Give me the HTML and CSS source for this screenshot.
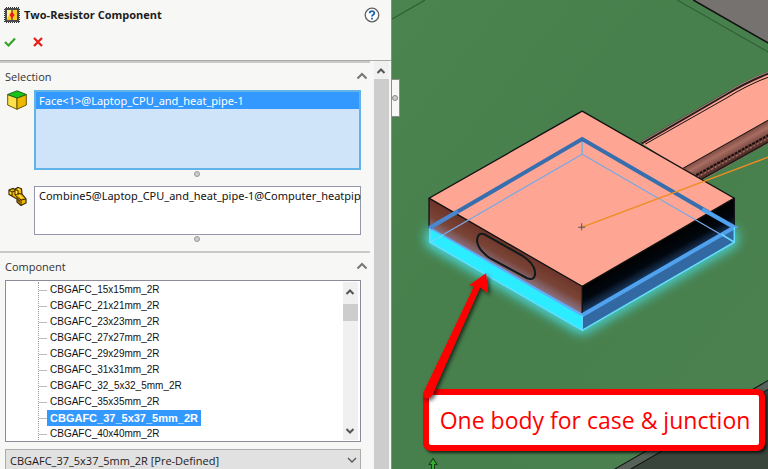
FILE: index.html
```html
<!DOCTYPE html>
<html lang="en">
<head>
<meta charset="utf-8">
<title>Two-Resistor Component</title>
<link rel="stylesheet" href="styles.css">
</head>
<body>
<main class="app">
  <aside class="panel">
    <header class="panel-head">
      <div class="title-row">
        <svg class="icon-16" viewBox="0 0 16 16" aria-hidden="true">
          <path d="M2 .5H15M2 15.500H15M.5 2V15M15.500 2V15" stroke="#333" stroke-dasharray="1 1"/>
          <rect x="1" y="1" width="14" height="14" fill="#4b4b4b"/>
          <rect x="3" y="3" width="10" height="10" fill="#ffc928"/>
          <path d="M3 3h5L3 12z" fill="#fff08a"/>
          <path d="M8 3v10" stroke="#222"/>
          <path d="M8 4.500L10.500 8 8 11.500 5.500 8z" fill="#ed1c16"/>
        </svg>
        <h1>Two-Resistor Component</h1>
        <button class="plain help" aria-label="Help">
          <svg class="icon-16" viewBox="0 0 16 16"><circle cx="8" cy="8" r="6.800" fill="#fff" stroke="#626262" stroke-width="1.300"/><path d="M5.700 6.300C5.700 3.300 10.400 3.400 10.300 6.200C10.200 7.800 8 7.700 8 9.500M8 10.800v1.700" fill="none" stroke="#1d66b0" stroke-width="1.900"/></svg>
        </button>
      </div>
      <div class="action-row">
        <button class="plain" aria-label="OK"><svg class="icon-12" viewBox="0 0 12 12"><path d="M1 6l3.500 3.500L11 2.500" fill="none" stroke="#36a329" stroke-width="2.200"/></svg></button>
        <button class="plain" aria-label="Cancel"><svg class="icon-12" viewBox="0 0 12 12"><path d="M2 2l8 8M10 2l-8 8" fill="none" stroke="#e32119" stroke-width="2.300"/></svg></button>
      </div>
    </header>
    <div class="panel-body">
      <div class="sections">
        <section class="section">
          <div class="section-head">
            <h2>Selection</h2>
            <button class="plain" aria-label="Collapse Selection"><svg class="chev" viewBox="0 0 12 8"><path d="M1.500 6.500L6 2l4.500 4.500" fill="none" stroke="#777" stroke-width="2"/></svg></button>
          </div>
          <div class="pick-row">
            <svg class="pick-icon" viewBox="0 0 20 20" aria-hidden="true">
              <path d="M.7 4.500L10 8v11.300L.7 15z" fill="#ffe14a" stroke="#6b5500"/>
              <path d="M19.300 4.500L10 8v11.300l9.300-4.300z" fill="#edb900" stroke="#6b5500"/>
              <path d="M.7 4.500L10 .8l9.300 3.700L10 8z" fill="#18c51b" stroke="#23661a"/>
            </svg>
            <div class="pick-box active" role="listbox" aria-label="Faces"><div class="pick" role="option" aria-selected="true">Face&lt;1&gt;@Laptop_CPU_and_heat_pipe-1</div></div>
          </div>
          <div class="grip"></div>
          <div class="pick-row">
            <svg class="pick-icon" viewBox="0 0 20 20" aria-hidden="true">
              <path d="M2 4l4-1.500 2 1V3l3-1.500L14.500 3l.5 5 4 5v4l-5 2.500-4-3.500V13L2 8.500z" fill="#efb800" stroke="#3c2900" stroke-width="1.200"/>
              <path d="M2 4l3 2v4M8 3.500V9l6 5 5-1M8 3.500l3 1V9M14 14v5M5 6l3-1M8 9l3-1.500 4 .5" fill="none" stroke="#3c2900"/>
              <path d="M9 10l4 4v3l-3-2.500z" fill="#6b4a08"/>
              <path d="M3.500 6v2M9.500 5v3M11 3l2 .8M12 9l3 3" stroke="#ffe34d" stroke-width="1.500"/>
            </svg>
            <div class="pick-box small" role="listbox" aria-label="Bodies"><div class="pick" role="option" aria-selected="false">Combine5@Laptop_CPU_and_heat_pipe-1@Computer_heatpip</div></div>
          </div>
          <div class="grip"></div>
        </section>
        <section class="section component">
          <div class="section-head">
            <h2>Component</h2>
            <button class="plain" aria-label="Collapse Component"><svg class="chev" viewBox="0 0 12 8"><path d="M1.500 6.500L6 2l4.500 4.500" fill="none" stroke="#777" stroke-width="2"/></svg></button>
          </div>
          <div class="tree-box">
            <ul class="tree" role="tree" aria-label="Component">
              <li role="treeitem"><span>CBGAFC_15x15mm_2R</span></li>
              <li role="treeitem"><span>CBGAFC_21x21mm_2R</span></li>
              <li role="treeitem"><span>CBGAFC_23x23mm_2R</span></li>
              <li role="treeitem"><span>CBGAFC_27x27mm_2R</span></li>
              <li role="treeitem"><span>CBGAFC_29x29mm_2R</span></li>
              <li role="treeitem"><span>CBGAFC_31x31mm_2R</span></li>
              <li role="treeitem"><span>CBGAFC_32_5x32_5mm_2R</span></li>
              <li role="treeitem"><span>CBGAFC_35x35mm_2R</span></li>
              <li role="treeitem" aria-selected="true"><span>CBGAFC_37_5x37_5mm_2R</span></li>
              <li role="treeitem"><span>CBGAFC_40x40mm_2R</span></li>
            </ul>
            <div class="tree-scroll">
              <svg class="arrow" viewBox="0 0 10 8"><path d="M1.500 6L5 2.500 8.500 6" fill="none" stroke="#555" stroke-width="2"/></svg>
              <div class="tree-thumb"></div>
              <svg class="arrow" viewBox="0 0 10 8"><path d="M1.500 2L5 5.500 8.500 2" fill="none" stroke="#555" stroke-width="2"/></svg>
            </div>
          </div>
          <div class="combo">
            <select aria-label="Selected component"><option>CBGAFC_37_5x37_5mm_2R [Pre-Defined]</option></select>
            <svg class="combo-arrow" viewBox="0 0 10 8" aria-hidden="true"><path d="M1 2l4 4 4-4" fill="none" stroke="#555" stroke-width="1.300"/></svg>
          </div>
        </section>
      </div>
      <div class="main-scroll">
        <svg class="arrow" viewBox="0 0 10 8"><path d="M1.500 6L5 2.500 8.500 6" fill="none" stroke="#555" stroke-width="2"/></svg>
        <div class="main-thumb"></div>
      </div>
    </div>
  </aside>

  <section class="viewport" aria-label="Model view">
    <svg class="scene" viewBox="392 0 376 469" preserveAspectRatio="xMinYMin slice" role="img" aria-label="Heat pipe and processor body">
      <defs>
        <linearGradient id="board" x1="0" y1="0" x2="1" y2="1"><stop offset="0" stop-color="#4c8450"/><stop offset=".4" stop-color="#47804c"/><stop offset="1" stop-color="#4b8150"/></linearGradient>
        <linearGradient id="brown" gradientUnits="userSpaceOnUse" x1="506" y1="242" x2="492" y2="267"><stop offset="0" stop-color="#6d3428"/><stop offset=".5" stop-color="#794437"/><stop offset="1" stop-color="#8d829d"/></linearGradient>
        <linearGradient id="black" gradientUnits="userSpaceOnUse" x1="658" y1="242" x2="672" y2="267"><stop offset="0" stop-color="#000"/><stop offset=".5" stop-color="#020810"/><stop offset="1" stop-color="#234c7e"/></linearGradient>
        <linearGradient id="tube" gradientUnits="userSpaceOnUse" x1="721" y1="146" x2="731" y2="164"><stop offset="0" stop-color="#7d473e"/><stop offset=".3" stop-color="#a86d62"/><stop offset=".6" stop-color="#7d4d45"/><stop offset="1" stop-color="#3b211c"/></linearGradient>
        <filter id="glow" x="-20%" y="-30%" width="140%" height="170%"><feGaussianBlur stdDeviation="6"/></filter>
        <filter id="soft" x="-20%" y="-20%" width="150%" height="150%"><feDropShadow dx="2" dy="2" stdDeviation="2" flood-color="#000" flood-opacity=".7"/></filter>
      </defs>
      <rect x="391" width="378" height="470" fill="url(#board)"/>
      <path d="M392 19L425 0" stroke="#2d5831" fill="none"/>
      <path d="M693 0H768V43z" fill="#757270"/>
      <path d="M693 0L768 43" stroke="#111" stroke-width="1.500"/>
      <path d="M677 0L768 52" stroke="#315d36"/>
      <path d="M614 469L768 380V469z" fill="#566159"/>
      <path d="M630 469L768 389V469z" fill="#39443a"/>
      <path d="M614 469L768 380M630 469L768 389" stroke="#111" fill="none"/>

      <path d="M641 143L724 96Q746 83 768 74V143L700 181z" fill="#ffa594"/>
      <path d="M641 143L724 95Q745 82 768 73" fill="none" stroke="#2b1b1a" stroke-width="3"/>
      <path d="M641 142L724 94Q745 81 768 72" fill="none" stroke="#b08b88"/>
      <path d="M683 168L768 120V142L698 181z" fill="url(#tube)"/>
      <path d="M683 168L768 120M645 144L726 98Q747 85 768 77" stroke="#111" fill="none"/>
      <path d="M696 175L768 135" stroke="#1a0d0b" stroke-width="2" stroke-dasharray="3 1"/>
      <path d="M697 177L768 138" stroke="#b07a6e" stroke-width="1" stroke-dasharray="2 2"/>
      <path d="M700 180L768 142" stroke="#211c19" stroke-width="1.500"/>

      <path d="M431 229V242L582 329L732 242V229" fill="none" stroke="#49efff" stroke-width="8" filter="url(#glow)"/>
      <path d="M430 236L582 323" fill="none" stroke="#49efff" stroke-width="8" opacity=".5" filter="url(#glow)"/>
      <path d="M429 198L582 286V315L429 228z" fill="url(#brown)"/>
      <path d="M582 286L734 198V227L582 315z" fill="url(#black)"/>
      <path d="M429 228L582 315V330L429 242z" fill="#2cecff"/>
      <path d="M582 315L734 227V242L582 330z" fill="#3269a2"/>
      <path d="M582 111L734 198L582 286L429 198z" fill="#ffa594" stroke="#111" stroke-width="1.300"/>
      <path d="M429 198V228M582 286V315M734 198V227" stroke="#111" stroke-width="1.300"/>
      <path d="M484 234L523 256Q534 263 535 272Q535 281 527 278L490 258Q478 250 477 241Q477 232 484 234z" fill="none" stroke="#111a1c" stroke-width="2"/>
      <path d="M430 242L582 154L734 242M582 139V154" fill="none" stroke="#7ba9e2" stroke-width="1.300"/>
      <path d="M429 228L582 139L734 227" fill="none" stroke="#376fae" stroke-width="4"/>
      <path d="M429 228L582 315" fill="none" stroke="#65aaf5" stroke-width="3"/>
      <path d="M431 231L582 318" fill="none" stroke="#2cecff" stroke-width="3"/>
      <path d="M582 315L734 227L702 209" fill="none" stroke="#50a1ee" stroke-width="4"/>
      <path d="M429 228L458 211" stroke="#4c87cd" stroke-width="4"/>
      <path d="M430 228V242L582 330V315M582 330L734 242V227M430 242L443 235M734 242L721 234" fill="none" stroke="#65ddff" stroke-width="1.500"/>
      <path d="M582 227L768 157" stroke="#ef8c21" stroke-width="1.300"/>
      <path d="M578 227h7M581.500 223v7" stroke="#555"/>

      <g stroke="#164017"><path d="M433 460V469" stroke-width="4"/><path d="M433 458l4 6h-8z" fill="#39ac35"/><path d="M433 462V469" stroke="#39ac35" stroke-width="2"/></g>
    </svg>
    <p class="callout">One body for case &amp; junction</p>
    <svg class="scene over" viewBox="392 0 376 469" preserveAspectRatio="xMinYMin slice" aria-hidden="true">
      <path d="M423.500 392Q421 398 427 398Q431 398 432.500 394L480 287L488 293L486 273L469 285L474 286z" fill="red" filter="url(#soft)"/>
    </svg>
    <button class="splitter" aria-label="Resize panel"><span class="dot"></span></button>
  </section>
</main>
</body>
</html>
```
FILE: styles.css
```css
* { box-sizing: border-box; }
body {
  margin: 0;
  font-family: "Open Sans", "Noto Sans", sans-serif;
  font-size: 11px;
  color: #1c1c1c;
}
h1, h2, p, ul { margin: 0; padding: 0; }
svg { display: block; flex: none; }
.app {
  display: grid;
  grid-template-columns: minmax(300px, 51%) 1fr;
  height: 100vh;
  overflow: hidden;
}
.plain { padding: 0; border: 0; background: none; }
.icon-16 { width: 16px; height: 16px; }
.icon-12 { width: 12px; height: 12px; }

.panel {
  display: flex;
  flex-direction: column;
  min-width: 0;
  min-height: 0;
  background: #f7f7f5;
  border-right: 1px solid #8b8d8b;
}
.panel-head { padding: 7px 11px 12px 4px; border-bottom: 1px solid #aaa; }
.title-row { display: flex; align-items: center; gap: 4px; height: 16px; }
.title-row h1 { font-size: 11px; font-weight: 700; line-height: 16px; }
.help { margin-left: auto; }
.action-row { display: flex; gap: 16px; padding-top: 13px; }

.panel-body { display: flex; flex: 1; gap: 4px; min-height: 0; padding-right: 2px; }
.sections { flex: 1; min-width: 0; overflow: hidden; }
.section { padding: 5px 9px 0 5px; border-top: 2px solid #c9c9c9; }
.section-head {
  display: flex;
  align-items: center;
  justify-content: space-between;
  height: 16px;
  margin-bottom: 6px;
}
.section-head h2 { font-size: 11px; font-weight: 500; color: #333; }
.section-head .plain { margin-right: -7px; }
.chev { width: 12px; height: 8px; }
.pick-row { display: flex; gap: 7px; padding-left: 2px; }
.pick-icon { width: 20px; height: 20px; }
.pick-box {
  flex: 1;
  min-width: 0;
  height: 49px;
  border: 1px solid #9597ad;
  background: #fff;
}
.pick-box.active { height: 80px; border: 2px solid #62b3e8; background: #cfe4f8; }
.pick {
  padding: 0 4px;
  font-family: "Noto Sans", sans-serif;
  font-size: 11px;
  line-height: 17px;
  white-space: nowrap;
  color: #111;
}
.active .pick { padding: 0 3px; background: #3399ff; color: #fff; }
.grip {
  width: 6px;
  height: 6px;
  margin: 1px 0 9px 189px;
  border: 1px solid #999;
  border-radius: 50%;
  background: #ccc;
}

.tree-box {
  display: flex;
  height: 162px;
  padding: 1px 2px 1px 0;
  border: 1px solid #8a8d99;
  background: #fff;
}
.tree {
  flex: 1;
  margin-left: 32px;
  list-style: none;
  border-left: 1px dotted #999;
  font-family: "Liberation Sans", Arial, sans-serif;
  font-size: 10px;
  color: #111;
}
.tree li { display: flex; align-items: center; height: 16px; }
.tree li::before { content: ""; width: 8px; border-top: 1px solid #bbb; }
.tree span { padding: 0 3px; line-height: 16px; }
.tree [aria-selected="true"] span { background: #3399ff; color: #fff; font-size: 11px; font-weight: 700; }
.tree-scroll {
  display: flex;
  flex-direction: column;
  justify-content: space-between;
  align-items: center;
  width: 15px;
  padding: 6px 0 5px;
  background: #f0f0f0;
}
.arrow { width: 10px; height: 8px; }
.tree-thumb { width: 15px; height: 17px; margin: 8px 0 auto; background: #cdcdcd; }
.combo { position: relative; margin-top: 7px; }
.combo select {
  appearance: none;
  display: block;
  width: 100%;
  height: 22px;
  padding: 0 20px 0 4px;
  border: 1px solid #adadad;
  border-radius: 0;
  background: #e1e1e1;
  font: 11px "Open Sans", "Noto Sans", sans-serif;
  color: #1c1c1c;
}
.combo-arrow { position: absolute; top: 7px; right: 4px; width: 10px; height: 8px; pointer-events: none; }

.main-scroll {
  display: flex;
  flex-direction: column;
  align-items: center;
  gap: 4px;
  width: 15px;
  padding-top: 6px;
  background: #f0f0f0;
}
.main-thumb { flex: 1; width: 100%; background: #cdcdcd; }

.viewport { position: relative; min-width: 0; overflow: hidden; background: #4a8250; }
.scene { width: 100%; height: 100%; }
.over { position: absolute; top: 0; left: 0; pointer-events: none; }
.callout {
  position: absolute;
  left: 31px;
  right: 3px;
  top: 389px;
  padding: 8px 11px;
  border: 6px solid red;
  border-radius: 8px;
  background: #fff;
  box-shadow: 2px 2px 3px rgba(0, 0, 0, 0.7);
  font-size: 23px;
  line-height: 34px;
  color: #f00;
  white-space: nowrap;
}
.splitter {
  position: absolute;
  left: 0;
  top: 79px;
  display: flex;
  align-items: center;
  justify-content: center;
  width: 8px;
  height: 38px;
  padding: 0;
  border: 1px solid #8b8d8b;
  border-left: 0;
  background: #f7f7f5;
}
.dot { width: 6px; height: 6px; border: 1px solid #888; border-radius: 50%; background: #ccc; }
```
